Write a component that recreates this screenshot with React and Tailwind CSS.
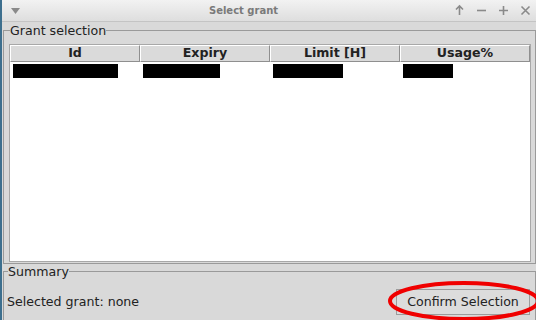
import React from 'react';

const columns = [
  { name: 'Id', bar: 'w-[105px]' },
  { name: 'Expiry', bar: 'w-[77px]' },
  { name: 'Limit [H]', bar: 'w-[70px]' },
  { name: 'Usage%', bar: 'w-[50px]' },
];

function TitleButtons() {
  return (
    <div className="flex items-center gap-[9px] pr-[4px] text-[#8a8a8a]">
      <svg width="13" height="13" viewBox="0 0 13 13"><path d="M6.5 2v9M3 5.5l3.5-3.5 3.5 3.5" stroke="currentColor" strokeWidth="1.6" fill="none" /></svg>
      <svg width="13" height="13" viewBox="0 0 13 13"><path d="M2 6.5h9" stroke="currentColor" strokeWidth="1.6" /></svg>
      <svg width="13" height="13" viewBox="0 0 13 13"><path d="M2 6.5h9M6.5 2v9" stroke="currentColor" strokeWidth="1.6" /></svg>
      <svg width="13" height="13" viewBox="0 0 13 13"><path d="M2.5 2.5l8 8M10.5 2.5l-8 8" stroke="currentColor" strokeWidth="1.6" /></svg>
    </div>
  );
}

export default function App() {
  return (
    <div className="relative w-[536px] h-[320px] overflow-hidden bg-[#d9d9d9] border-l-2 border-[#3d6f8e] flex flex-col font-['DejaVu_Sans',sans-serif] text-[12.6px] text-[#222]">
      {/* title bar */}
      <div className="h-[22px] flex items-center justify-between bg-gradient-to-b from-[#f2f2f2] to-[#dedede] border-b border-[#c4c4c4]">
        <svg className="ml-[9px]" width="9" height="6" viewBox="0 0 9 6"><path d="M0 0h9L4.5 6z" fill="#8a8a8a" /></svg>
        <span className="text-[10px] font-bold text-[#7a7a7a] ml-[14px]">Select grant</span>
        <TitleButtons />
      </div>

      {/* grant selection */}
      <fieldset className="ml-[1px] mt-[1px] border border-[#9a9a9a] pl-[5px] pr-[3px] pb-[1px]">
        <legend className="ml-[1px] px-0 leading-[15px]">Grant selection</legend>
        <div className="h-[218px] w-[522px] bg-white border border-[#a8a8a8] mt-[6px]">
          <div className="flex h-[17px]">
            {columns.map(c => (
              <div key={c.name} className="w-[130px] bg-[#dadada] border-t border-l border-white border-r border-b border-r-[#8f8f8f] border-b-[#8f8f8f] flex items-center justify-center font-bold leading-none">
                {c.name}
              </div>
            ))}
          </div>
          <div className="flex pt-[2px]">
            {columns.map(c => (
              <div key={c.name} className="w-[130px] px-[3px]">
                <div className={`h-[14px] bg-black ${c.bar}`} />
              </div>
            ))}
          </div>
        </div>
      </fieldset>

      {/* summary */}
      <fieldset className="ml-[1px] flex-1 border border-[#9a9a9a] border-b-0 pl-[3px] pr-[5px]">
        <legend className="ml-[1px] px-0 leading-[15px]">Summary</legend>
        <div className="flex items-center justify-between mt-[10px]">
          <span>Selected grant: none</span>
          <button className="h-[26px] w-[134px] border border-[#9c9c9c] bg-[#dcdcdc]">Confirm Selection</button>
        </div>
      </fieldset>

      {/* annotation */}
      <svg className="absolute left-0 top-0 pointer-events-none" width="536" height="320">
        <ellipse cx="462" cy="301" rx="74" ry="18" fill="none" stroke="#f00000" strokeWidth="4" />
      </svg>
    </div>
  );
}
